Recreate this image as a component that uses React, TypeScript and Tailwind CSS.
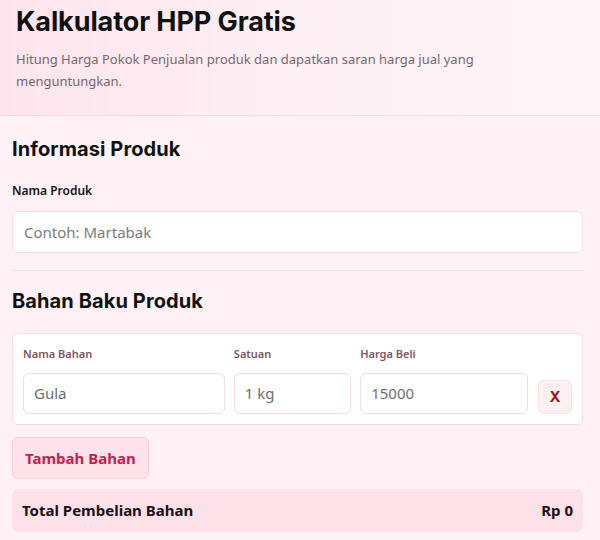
export default function App() {
  const heading = { fontFamily: "Inter, 'Noto Sans', sans-serif" };
  const body = { fontFamily: "'Noto Sans', 'Open Sans', sans-serif" };

  return (
    <div className="w-[600px] h-[540px] overflow-hidden bg-[#fff1f6]" style={body}>
      {/* Header */}
      <div className="h-[116px] px-4 pt-[4px] border-b border-[#f6d9e2] bg-gradient-to-r from-[#fde4ec] via-[#fef0f4] to-[#fff5f8]">
        <h1 className="text-[27px] font-bold text-[#111] leading-[36px] tracking-[-0.1px]" style={heading}>
          Kalkulator HPP Gratis
        </h1>
        <p className="mt-[8px] text-[13px] leading-[22px] text-[#7a6870]">
          Hitung Harga Pokok Penjualan produk dan dapatkan saran harga jual yang
          <br />
          menguntungkan.
        </p>
      </div>

      <div className="pl-3 pr-[17px]">
        {/* Informasi Produk */}
        <h2 className="mt-[21px] text-[20px] font-bold text-[#111] leading-[24px] tracking-[0.1px]" style={heading}>
          Informasi Produk
        </h2>
        <div className="mt-[22px] text-[12px] font-semibold text-[#1a1016] leading-[16px]">Nama Produk</div>
        <div className="mt-[12px] h-[42px] rounded-md bg-white border border-[#f5dde5] flex items-center px-[11px] text-[15px] text-[#7c7c7c]">
          Contoh: Martabak
        </div>

        <div className="mt-[17px] border-t border-[#f5dde5]" />

        {/* Bahan Baku */}
        <h2 className="mt-[18px] text-[20px] font-bold text-[#111] leading-[24px] tracking-[0.1px]" style={heading}>
          Bahan Baku Produk
        </h2>
        <div className="mt-[20px] rounded-md bg-white border border-[#f5dde5] px-[10px] pt-[12px] pb-[10px] flex items-end gap-[9px]">
          <div className="w-[203px] flex flex-col">
            <span className="text-[11px] font-semibold text-[#7b5664] leading-[16px]">Nama Bahan</span>
            <div className="mt-[11px] h-[41px] rounded-md border border-[#f2dce3] flex items-center px-[10px] text-[15px] text-[#6f6f6f]">Gula</div>
          </div>
          <div className="w-[118px] flex flex-col">
            <span className="text-[11px] font-semibold text-[#7b5664] leading-[16px]">Satuan</span>
            <div className="mt-[11px] h-[41px] rounded-md border border-[#f2dce3] flex items-center px-[10px] text-[15px] text-[#6f6f6f]">1 kg</div>
          </div>
          <div className="w-[169px] flex flex-col">
            <span className="text-[11px] font-semibold text-[#7b5664] leading-[16px]">Harga Beli</span>
            <div className="mt-[11px] h-[41px] rounded-md border border-[#f2dce3] flex items-center px-[10px] text-[15px] text-[#6f6f6f]">15000</div>
          </div>
          <button className="ml-[1px] w-[34px] h-[34px] rounded-md bg-[#fdf0f1] border border-[#f8e2e5] flex items-center justify-center text-[15px] font-bold text-[#a3141b]" style={heading}>
            X
          </button>
        </div>

        <button className="mt-[12px] h-[42px] px-[12px] rounded-md bg-[#fde2ea] border border-[#f6cfdb] text-[15px] font-bold text-[#c0214f]">
          Tambah Bahan
        </button>

        <div className="mt-[10px] h-[43px] rounded-md bg-[#fde1e9] flex items-center justify-between px-[10px] text-[15px] font-bold text-[#1b1016]">
          <span>Total Pembelian Bahan</span>
          <span>Rp 0</span>
        </div>
      </div>
    </div>
  );
}
